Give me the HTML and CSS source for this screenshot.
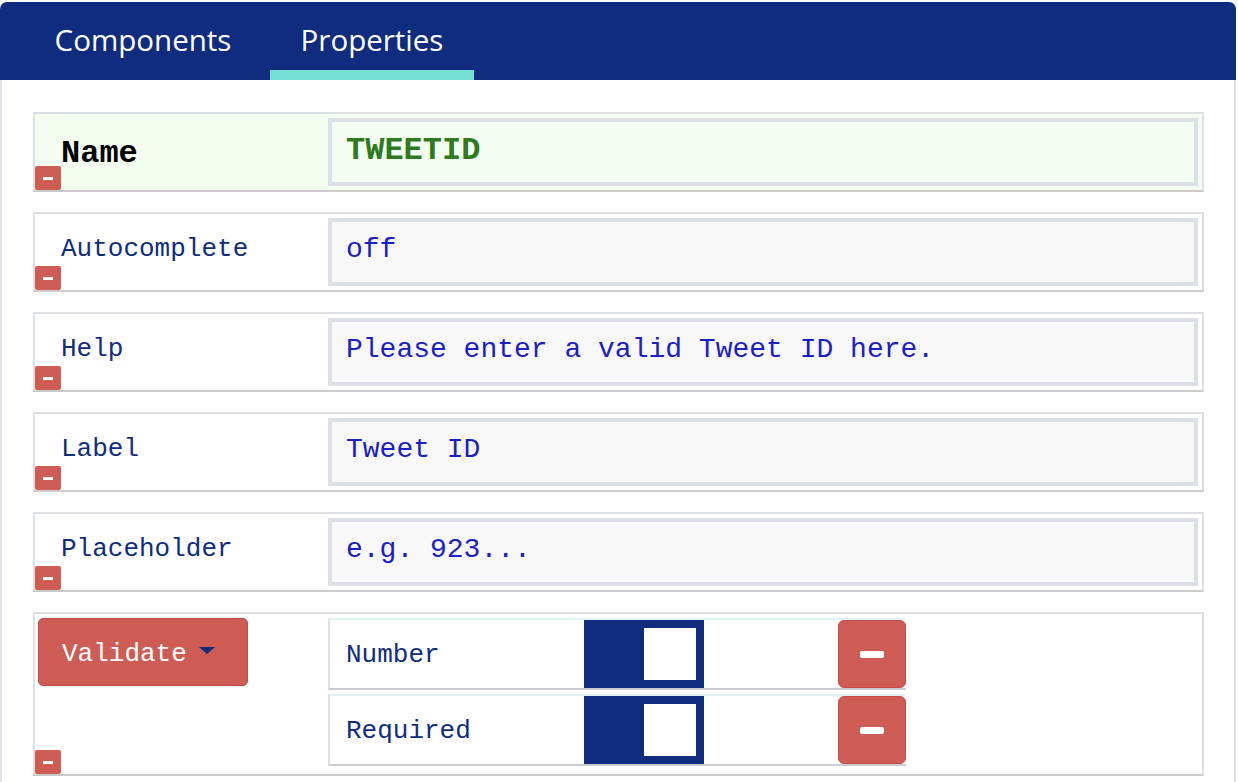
FILE: index.html
```html
<!DOCTYPE html>
<html>
<head>
<meta charset="utf-8">
<link rel="stylesheet" href="styles.css">
</head>
<body>
<div class="app">
  <nav class="tabs">
    <div class="tab tab-components">Components</div>
    <div class="tab tab-properties active">Properties</div>
  </nav>
  <div class="panel">
    <div class="prop prop-name">
      <div class="prop-label">
        <span class="label-text">Name</span>
        <button class="del-sm"><span class="bar"></span></button>
      </div>
      <div class="prop-value">TWEETID</div>
    </div>
    <div class="prop">
      <div class="prop-label">
        <span class="label-text">Autocomplete</span>
        <button class="del-sm"><span class="bar"></span></button>
      </div>
      <div class="prop-value">off</div>
    </div>
    <div class="prop">
      <div class="prop-label">
        <span class="label-text">Help</span>
        <button class="del-sm"><span class="bar"></span></button>
      </div>
      <div class="prop-value">Please enter a valid Tweet ID here.</div>
    </div>
    <div class="prop">
      <div class="prop-label">
        <span class="label-text">Label</span>
        <button class="del-sm"><span class="bar"></span></button>
      </div>
      <div class="prop-value">Tweet ID</div>
    </div>
    <div class="prop">
      <div class="prop-label">
        <span class="label-text">Placeholder</span>
        <button class="del-sm"><span class="bar"></span></button>
      </div>
      <div class="prop-value">e.g. 923...</div>
    </div>
    <div class="prop prop-validate">
      <div class="prop-label">
        <button class="validate-btn">Validate<span class="caret"></span></button>
        <button class="del-sm"><span class="bar"></span></button>
      </div>
      <div class="rules">
        <div class="rule">
          <div class="rule-name">Number</div>
          <div class="toggle"><span class="knob"></span></div>
          <button class="del-lg"><span class="bar"></span></button>
        </div>
        <div class="rule">
          <div class="rule-name">Required</div>
          <div class="toggle"><span class="knob"></span></div>
          <button class="del-lg"><span class="bar"></span></button>
        </div>
      </div>
    </div>
  </div>
</div>
</body>
</html>
```

FILE: styles.css
```css
* { box-sizing: border-box; }

html, body {
  margin: 0;
  padding: 0;
  background: #ffffff;
}

body {
  font-family: "Liberation Mono", "Courier New", monospace;
}

.app {
  width: 1236px;
  padding-top: 2px;
}

.tabs {
  display: flex;
  gap: 7px;
  height: 78px;
  padding-left: 23px;
  background: #0f2c7f;
  border-radius: 7px 7px 0 0;
}

.tab {
  font-family: "Open Sans", "Liberation Sans", sans-serif;
  font-size: 29.5px;
  line-height: 40px;
  color: #ffffff;
  text-align: center;
  padding-top: 18px;
  height: 78px;
  border-bottom: 10px solid transparent;
}

.tab-components { width: 240px; }
.tab-properties { width: 204px; }

.tab.active {
  border-bottom-color: #77e0d4;
}

.panel {
  border-left: 2px solid #dfe2e8;
  border-right: 2px solid #dfe2e8;
  padding: 32px 30px 40px 31px;
  display: flex;
  flex-direction: column;
  gap: 20px;
}

.prop {
  display: flex;
  height: 80px;
  border: 2px solid #dcdfe4;
  border-bottom-color: #cbcbcb;
  background: #ffffff;
}

.prop-name {
  background: #f2fdf0;
}

.prop-label {
  width: 293px;
  display: flex;
  flex-direction: column;
  justify-content: space-between;
  align-items: flex-start;
}

.label-text {
  padding: 20px 0 0 26px;
  font-size: 26px;
  color: #0f2c7f;
}

.prop-name .label-text {
  padding-top: 30px;
  font-size: 32px;
  line-height: 20px;
  font-weight: bold;
  color: #000000;
}

.del-sm {
  flex-shrink: 0;
  width: 26px;
  height: 24px;
  border: 0;
  padding: 0;
  border-radius: 2px;
  background: #cd5c55;
  display: flex;
  align-items: center;
  justify-content: center;
}

.del-sm .bar {
  width: 10px;
  height: 3px;
  background: #ffffff;
}

.prop-value {
  flex: 1;
  margin: 4px 4px 4px 0;
  border: 4px solid #dcdfe6;
  background: #f8f8f8;
  padding: 12px 14px 0;
  font-size: 28px;
  color: #1b20c6;
  white-space: nowrap;
}

.prop-name .prop-value {
  background: #f3fdf1;
  padding-top: 10px;
  font-size: 32px;
  font-weight: bold;
  color: #2f7a1f;
}

.prop-validate {
  height: 164px;
}

.prop-validate .prop-label {
  padding-top: 4px;
}

.validate-btn {
  flex-shrink: 0;
  margin-left: 3px;
  width: 210px;
  height: 68px;
  border: 1px solid #c24c44;
  border-radius: 5px;
  background: #cd5c55;
  color: #ffffff;
  font-family: "Liberation Mono", "Courier New", monospace;
  font-size: 26px;
  line-height: 29px;
  text-align: left;
  padding: 21px 0 0 23px;
  display: flex;
  align-items: flex-start;
}

.caret {
  width: 0;
  height: 0;
  margin: 7px 0 0 12px;
  border-left: 8px solid transparent;
  border-right: 8px solid transparent;
  border-top: 7px solid #0f2c7f;
}

.rules {
  margin-top: 4px;
  display: flex;
  flex-direction: column;
  gap: 4px;
}

.rule {
  display: flex;
  width: 578px;
  height: 72px;
  border-top: 2px solid #e0f2f5;
  border-bottom: 2px solid #c9cbd1;
  border-left: 2px solid #dde0e4;
}

.rule-name {
  width: 254px;
  padding: 20px 0 0 16px;
  font-size: 26px;
  color: #0f2c7f;
}

.toggle {
  width: 120px;
  height: 68px;
  background: #0f2c7f;
  padding: 8px 8px 8px 60px;
}

.knob {
  display: block;
  width: 52px;
  height: 52px;
  background: #ffffff;
}

.del-lg {
  margin-left: 134px;
  width: 68px;
  height: 68px;
  padding: 0;
  border: 1px solid #c44c45;
  border-radius: 6px;
  background: #cd5c55;
  display: flex;
  align-items: center;
  justify-content: center;
}

.del-lg .bar {
  width: 24px;
  height: 7px;
  border-radius: 2px;
  background: #ffffff;
}
```
